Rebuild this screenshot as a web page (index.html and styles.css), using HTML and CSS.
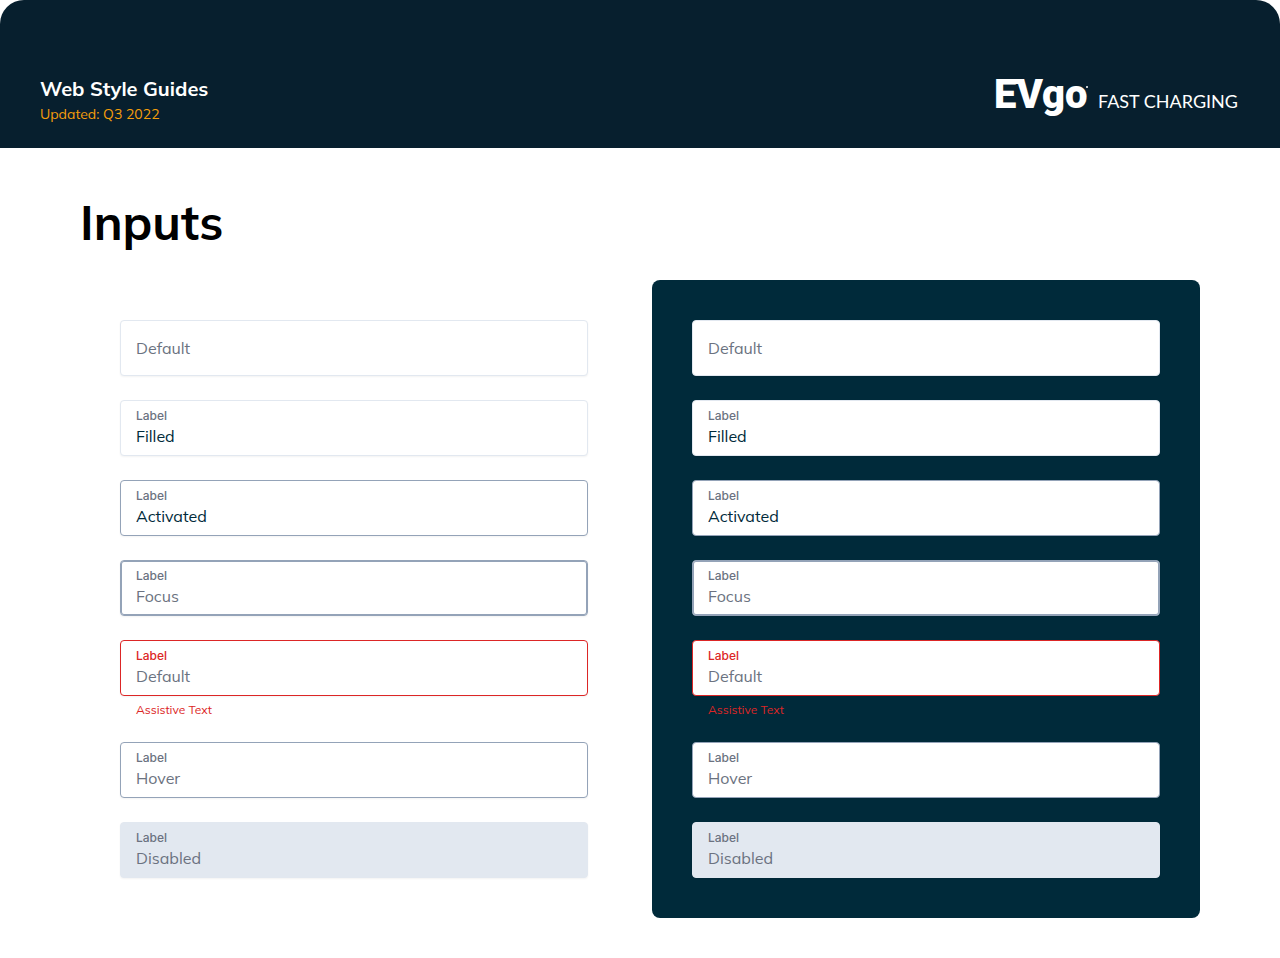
FILE: index.html
```html
<!DOCTYPE html>
<html lang="en">
<head>
  <meta charset="UTF-8">
  <meta name="viewport" content="width=device-width, initial-scale=1.0">
  <title>Web Style Guides - Inputs</title>
  <link rel="stylesheet" href="styles.css">
</head>
<body>
  <header>
    <div class="guide">
      <p class="guide-title">Web Style Guides</p>
      <p class="guide-date">Updated: Q3 2022</p>
    </div>
    <div class="brand">
      <svg class="logo" viewBox="0 0 96 48" role="img" aria-label="EVgo">
        <rect x="12" y="3" width="18" height="5" />
        <text x="0" y="32">EVgo</text>
        <circle cx="93" cy="11" r="1" />
      </svg>
      <span class="tagline">FAST CHARGING</span>
    </div>
  </header>
  <main>
    <h1>Inputs</h1>
    <div class="themes">
      <section class="panel">
        <div class="field">
          <div class="box"><input type="text" placeholder="Default" aria-label="Default"></div>
        </div>
        <div class="field">
          <div class="box"><label for="l-filled">Label</label><input type="text" id="l-filled" value="Filled"></div>
        </div>
        <div class="field">
          <div class="box activated"><label for="l-activated">Label</label><input type="text" id="l-activated" value="Activated"></div>
        </div>
        <div class="field">
          <div class="box focus"><label for="l-focus">Label</label><input type="text" id="l-focus" placeholder="Focus"></div>
        </div>
        <div class="field">
          <div class="box error"><label for="l-error">Label</label><input type="text" id="l-error" placeholder="Default" aria-describedby="l-help"></div>
          <p class="assistive" id="l-help">Assistive Text</p>
        </div>
        <div class="field">
          <div class="box hover"><label for="l-hover">Label</label><input type="text" id="l-hover" placeholder="Hover"></div>
        </div>
        <div class="field">
          <div class="box disabled"><label for="l-disabled">Label</label><input type="text" id="l-disabled" placeholder="Disabled" disabled></div>
        </div>
      </section>
      <section class="panel dark">
        <div class="field">
          <div class="box"><input type="text" placeholder="Default" aria-label="Default"></div>
        </div>
        <div class="field">
          <div class="box"><label for="d-filled">Label</label><input type="text" id="d-filled" value="Filled"></div>
        </div>
        <div class="field">
          <div class="box activated"><label for="d-activated">Label</label><input type="text" id="d-activated" value="Activated"></div>
        </div>
        <div class="field">
          <div class="box focus"><label for="d-focus">Label</label><input type="text" id="d-focus" placeholder="Focus"></div>
        </div>
        <div class="field">
          <div class="box error"><label for="d-error">Label</label><input type="text" id="d-error" placeholder="Default" aria-describedby="d-help"></div>
          <p class="assistive" id="d-help">Assistive Text</p>
        </div>
        <div class="field">
          <div class="box hover"><label for="d-hover">Label</label><input type="text" id="d-hover" placeholder="Hover"></div>
        </div>
        <div class="field">
          <div class="box disabled"><label for="d-disabled">Label</label><input type="text" id="d-disabled" placeholder="Disabled" disabled></div>
        </div>
      </section>
    </div>
  </main>
</body>
</html>
```
FILE: styles.css
```css
/* Color Variables */
:root {
  --header: #071f2e;
  --navy: #002a3a;
  --orange: #f59e0b;
  --text-muted: #6b7280;
  --border: #e2e8f0;
  --border-strong: #94a3b8;
  --error: #dc2626;
}

/* Base styles */
* { box-sizing: border-box; }
body {
  margin: 0;
  font-family: Mulish, 'Open Sans', sans-serif;
  background-color: #fff;
  color: #000;
}
p { margin: 0; }

/* Header */
header {
  display: flex;
  justify-content: space-between;
  align-items: flex-start;
  padding: 76px 42px 22px 40px;
  background-color: var(--header);
  border-radius: 24px 24px 0 0;
  color: #fff;
}
.guide-title { font-size: 20px; line-height: 26px; font-weight: 700; }
.guide-date { font-size: 14px; line-height: 24px; color: var(--orange); }
.brand { display: flex; align-items: flex-start; gap: 8px; }
.logo {
  width: 96px;
  height: 48px;
  overflow: visible;
  fill: #fff;
  font-family: Roboto, sans-serif;
  font-size: 40px;
  font-weight: 900;
}
.tagline {
  padding-top: 14px;
  font-family: Lato, sans-serif;
  font-size: 18px;
  line-height: 22px;
}

/* Main content */
main { padding: 40px 80px; }
h1 {
  margin: 0 0 24px;
  font-size: 48px;
  line-height: 68px;
  font-weight: 700;
}
.themes {
  display: grid;
  grid-template-columns: 1fr 1fr;
  gap: 24px;
}
.panel {
  display: flex;
  flex-direction: column;
  gap: 24px;
  padding: 40px;
  border-radius: 8px;
}
.dark { background-color: var(--navy); }

/* Inputs */
.box {
  display: flex;
  flex-direction: column;
  justify-content: center;
  height: 56px;
  padding: 0 15px;
  background-color: #fff;
  border: 1px solid var(--border);
  border-radius: 4px;
  box-shadow: 0 1px 2px rgba(0,0,0,0.05);
}
.box label {
  font-family: Inter, sans-serif;
  font-size: 12px;
  line-height: 16px;
  font-weight: 500;
  color: var(--text-muted);
}
.box input {
  width: 100%;
  height: 24px;
  padding: 0;
  border: none;
  outline: none;
  background: none;
  font-family: inherit;
  font-size: 16px;
  color: var(--navy);
}
.box input::placeholder { color: var(--text-muted); opacity: 1; }
.activated, .hover { border-color: var(--border-strong); }
.focus {
  border-color: var(--border-strong);
  box-shadow: inset 0 0 0 1px var(--border-strong), 0 1px 2px rgba(0,0,0,0.05);
}
.error { border-color: var(--error); }
.error label { color: var(--error); }
.disabled { background-color: var(--border); }
.assistive {
  padding: 6px 16px 0;
  font-size: 12px;
  line-height: 16px;
  color: var(--error);
}
```
